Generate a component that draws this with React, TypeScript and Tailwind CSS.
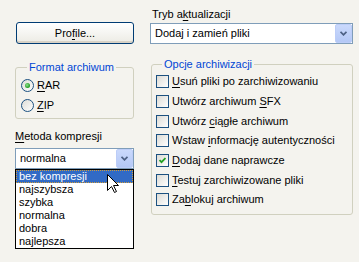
import React from "react";

const Acc = ({ t, i }: { t: string; i: number }) => (
  <>
    {t.slice(0, i)}
    <span className="underline underline-offset-[2px] decoration-1">{t[i]}</span>
    {t.slice(i + 1)}
  </>
);

function Check({ checked }: { checked?: boolean }) {
  return (
    <div className="w-[13px] h-[13px] shrink-0 border border-[#1c5180] bg-linear-to-br from-[#dcdbd5] to-white flex items-center justify-center">
      {checked && (
        <svg width="7" height="7" viewBox="0 0 7 7">
          <path d="M0.5 3 L2.5 5.2 L6.5 1" stroke="#21a121" strokeWidth="1.8" fill="none" />
        </svg>
      )}
    </div>
  );
}

function Radio({ on }: { on?: boolean }) {
  return (
    <svg width="13" height="13" viewBox="0 0 13 13" className="shrink-0">
      <defs>
        <linearGradient id="rg" x1="0" y1="0" x2="1" y2="1">
          <stop offset="0" stopColor="#dcdbd5" />
          <stop offset="1" stopColor="#ffffff" />
        </linearGradient>
        <radialGradient id="dot" cx="0.4" cy="0.4" r="0.6">
          <stop offset="0" stopColor="#8fe08f" />
          <stop offset="1" stopColor="#1d9a1d" />
        </radialGradient>
      </defs>
      <circle cx="6.5" cy="6.5" r="6" fill="url(#rg)" stroke="#1c5180" strokeWidth="1" />
      {on && <circle cx="6.5" cy="6.5" r="2.5" fill="url(#dot)" />}
    </svg>
  );
}

function Chevron() {
  return (
    <svg width="7" height="5" viewBox="0 0 7 5">
      <path d="M0.5 0.8 L3.5 3.8 L6.5 0.8" stroke="#4d6185" strokeWidth="1.8" fill="none" />
    </svg>
  );
}

function Combo({ text, w }: { text: string; w: string }) {
  return (
    <div className={`${w} h-[21px] border border-[#7f9db9] bg-white flex items-center`}>
      <span className="flex-1 pl-[4px] whitespace-nowrap">{text}</span>
      <div className="w-[17px] h-[19px] rounded-[2px] bg-linear-to-b from-[#cad9fc] to-[#b4c8f6] border border-[#bccdf8] flex items-center justify-center">
        <Chevron />
      </div>
    </div>
  );
}

const opts: { t: string; i: number; c?: boolean; mt: string }[] = [
  { t: "Usuń pliki po zarchiwizowaniu", i: 0, mt: "mt-[4px]" },
  { t: "Utwórz archiwum SFX", i: 16, mt: "mt-[7px]" },
  { t: "Utwórz ciągłe archiwum", i: 7, mt: "mt-[7px]" },
  { t: "Wstaw informację autentyczności", i: 6, mt: "mt-[6px]" },
  { t: "Dodaj dane naprawcze", i: 0, c: true, mt: "mt-[7px]" },
  { t: "Testuj zarchiwizowane pliki", i: 0, mt: "mt-[7px]" },
  { t: "Zablokuj archiwum", i: 2, mt: "mt-[6px]" },
];

const items = ["bez kompresji", "najszybsza", "szybka", "normalna", "dobra", "najlepsza"];

export default function App() {
  return (
    <div className="relative w-[359px] h-[262px] bg-[#f4f3ee] flex font-['Liberation_Sans',Arial,sans-serif] text-[11px] leading-[13px] text-black overflow-hidden">
      {/* left column */}
      <div className="ml-[15px] w-[119px] flex flex-col">
        <button className="mt-[22px] ml-[1px] w-[118px] h-[22px] rounded-[3px] border border-[#003c74] bg-linear-to-b from-white to-[#ecebe4] shadow-[inset_0_-2px_0_#d8d2c6] text-[11px] leading-[13px]">
          Pro<span className="underline underline-offset-[2px]">f</span>ile...
        </button>
        <fieldset className="mt-[17px] w-[119px] border border-[#d0d0bf] rounded-[3px] pl-[5px] pb-[6px]">
          <legend className="ml-[6px] px-[2px] text-[#0046d5] leading-[13px]">Format archiwum</legend>
          <div className="mt-[5px] flex items-center gap-[3px] h-[13px]">
            <Radio on />
            <span>
              <Acc t="RAR" i={0} />
            </span>
          </div>
          <div className="mt-[7px] flex items-center gap-[3px] h-[13px]">
            <Radio />
            <span>
              <Acc t="ZIP" i={0} />
            </span>
          </div>
        </fieldset>
        <div className="mt-[11px] h-[13px]">
          <Acc t="Metoda kompresji" i={0} />
        </div>
        <div className="mt-[5px]">
          <Combo text="normalna" w="w-[119px]" />
        </div>
        <div className="w-[119px] border border-black bg-white">
          {items.map((it, k) => (
            <div
              key={it}
              className={
                k === 0
                  ? "h-[13px] pl-[3px] bg-[#316ac5] text-white outline-1 outline-dotted outline-[#ce9c3c] -outline-offset-1"
                  : "h-[13px] pl-[3px]"
              }
            >
              {it}
            </div>
          ))}
        </div>
      </div>

      {/* right column */}
      <div className="ml-[16px] w-[203px] flex flex-col">
        <div className="mt-[8px] h-[13px] pl-[2px]">
          <Acc t="Tryb aktualizacji" i={6} />
        </div>
        <div className="mt-[2px]">
          <Combo text="Dodaj i zamień pliki" w="w-[203px]" />
        </div>
        <fieldset className="mt-[14px] ml-[1px] w-[202px] border border-[#d0d0bf] rounded-[3px] pl-[4px] pb-[8px]">
          <legend className="ml-[6px] px-[2px] text-[#0046d5] leading-[13px]">Opcje archiwizacji</legend>
          {opts.map((o) => (
            <div key={o.t} className={`${o.mt} flex items-center gap-[3px] h-[13px] whitespace-nowrap`}>
              <Check checked={o.c} />
              <span>
                <Acc t={o.t} i={o.i} />
              </span>
            </div>
          ))}
        </fieldset>
      </div>

      {/* mouse cursor */}
      <svg className="absolute left-[107px] top-[174px]" width="13" height="20" viewBox="0 0 13 20">
        <path
          d="M0.5 0.5 L0.5 16.5 L4.5 12.5 L7.5 18.5 L9.5 17.5 L6.5 11.5 L11.5 11.5 Z"
          fill="white"
          stroke="black"
          strokeWidth="1"
          strokeLinejoin="miter"
        />
      </svg>
    </div>
  );
}
